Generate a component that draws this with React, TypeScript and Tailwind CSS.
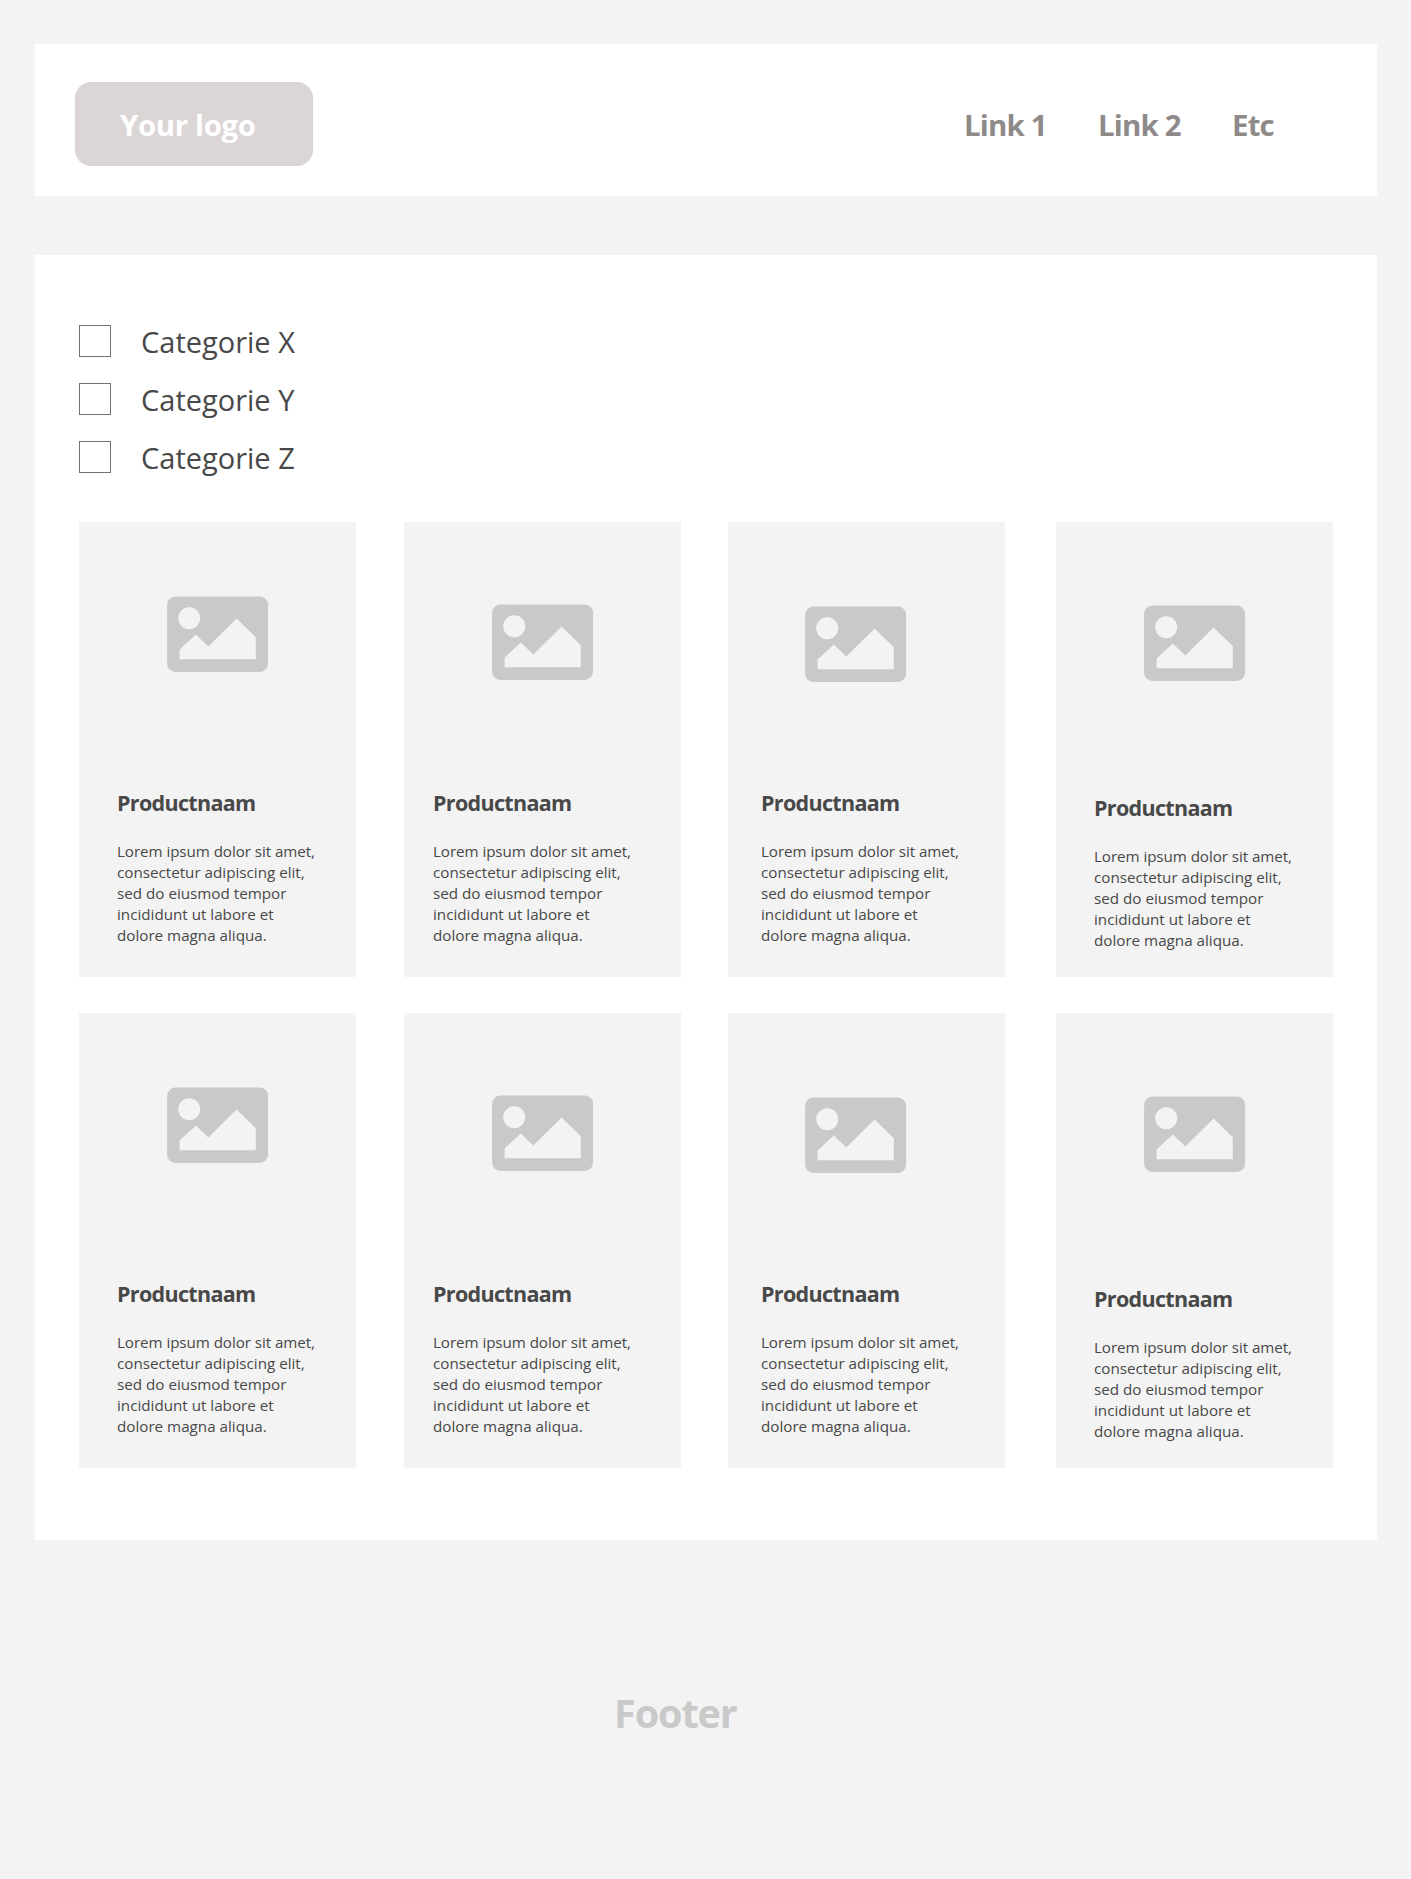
type Column = { image: string; text: string };

const links = ["Link 1", "Link 2", "Etc"];
const categories = ["Categorie X", "Categorie Y", "Categorie Z"];

const lines = [
  "Lorem ipsum dolor sit amet,",
  "consectetur adipiscing elit,",
  "sed do eiusmod tempor",
  "incididunt ut labore et",
  "dolore magna aliqua.",
];

// Each column has its own picture and text inset.
const columns: Column[] = [
  { image: "h-[267px] pt-[72px] pl-[86px]", text: "pl-[38px]" },
  { image: "h-[267px] pt-[80px] pl-[86px]", text: "pl-[29px]" },
  { image: "h-[267px] pt-[82px] pl-[75px]", text: "pl-[33px]" },
  { image: "h-[272px] pt-[81px] pl-[86px]", text: "pl-[38px]" },
];

function Placeholder() {
  return (
    <svg width="105" height="80" viewBox="-2 -2 105 80" className="block blur-[0.7px]" aria-hidden="true">
      <rect x="0.1" y="0.6" width="101" height="75.3" rx="8.5" fill="#c9c9c9" />
      <circle cx="22.2" cy="22.2" r="11" fill="#f3f3f3" />
      <path d="M12.6 53.4 28.8 38.6 41.4 50.4 69.6 22.6 88.8 41.2V63.2H12.6Z" fill="#f3f3f3" />
    </svg>
  );
}

function ProductCard({ column }: { column: Column }) {
  return (
    <article className="h-[455px] w-[277px] bg-[#f3f3f3]">
      <div className={column.image}>
        <Placeholder />
      </div>
      <div className={column.text}>
        <h2 className="text-[21.5px] leading-7 font-bold tracking-[-0.68px]">Productnaam</h2>
        <p className="mt-6 text-[15.2px] leading-[21px] whitespace-nowrap first-line:tracking-[-0.07px]">
          {lines.map((line) => (
            <span key={line} className="block">
              {line}
            </span>
          ))}
        </p>
      </div>
    </article>
  );
}

export default function App() {
  return (
    <div className="min-h-[1879px] w-[1411px] bg-[#f3f3f3] pt-11 pl-[35px] font-['Open_Sans','Noto_Sans',sans-serif] text-[#484848]">
      <header className="flex h-[152px] w-[1342px] items-start justify-between bg-white pt-[38px] pl-10 text-[29.4px] leading-[85px] font-bold">
        <div className="h-[84px] w-[238px] rounded-2xl bg-[#dbd5d5] pt-px pl-[45px] tracking-[-0.36px] text-white">
          Your logo
        </div>
        <nav className="grid w-[413px] grid-cols-[134px_134px_1fr] pt-px tracking-[-0.8px] text-[#8f8a8a]">
          {links.map((link) => (
            <a key={link} href="#">
              {link}
            </a>
          ))}
        </nav>
      </header>

      <main className="mt-[59px] h-[1285px] w-[1342px] bg-white pt-[70px] pl-11">
        <ul className="flex flex-col gap-[26px]">
          {categories.map((category) => (
            <li key={category} className="flex h-8 items-start gap-[30px]">
              <span className="size-8 border border-[#707070] bg-white" />
              <span className="pt-px text-[29px] leading-8">{category}</span>
            </li>
          ))}
        </ul>
        <div className="mt-[49px] grid grid-cols-[325px_324px_328px_277px] gap-y-9">
          {[...columns, ...columns].map((column, index) => (
            <ProductCard key={index} column={column} />
          ))}
        </div>
      </main>

      <footer className="mt-[149px] ml-[579px] text-[39.5px] leading-[48px] font-bold tracking-[-1.05px] text-[#c9c9c9]">
        Footer
      </footer>
    </div>
  );
}
